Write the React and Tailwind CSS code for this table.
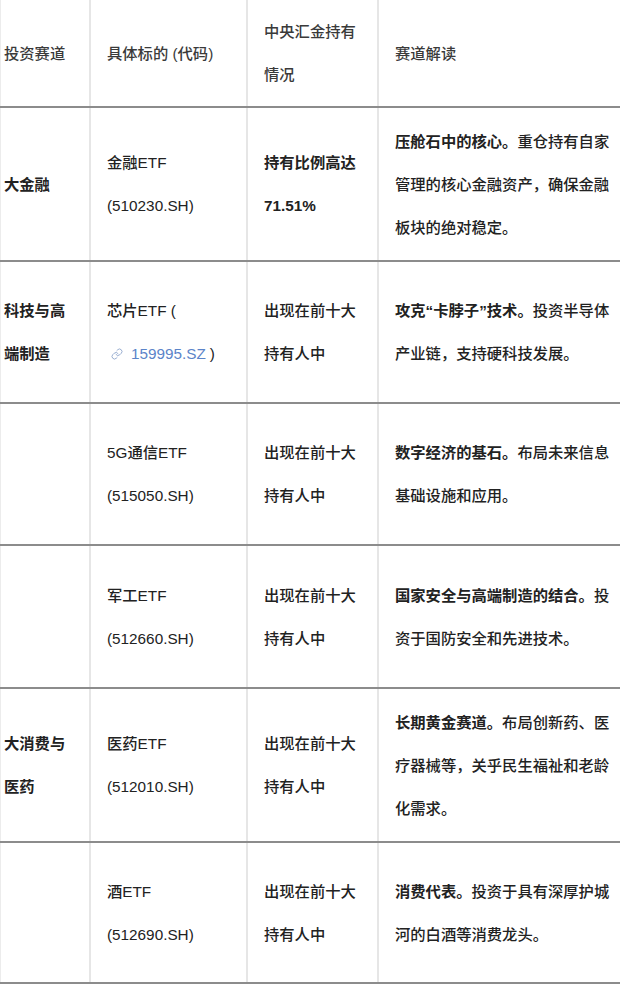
import { Link } from "lucide-react";

const rows = [
  {
    h: "h-[154px]",
    track: ["大金融"],
    target: ["金融ETF", "(510230.SH)"],
    hold: ["持有比例高达", "71.51%"],
    holdBold: true,
    lead: "压舱石中的核心。",
    rest: ["重仓持有自家", "管理的核心金融资产，确保金融", "板块的绝对稳定。"],
  },
  {
    h: "h-[142px]",
    track: ["科技与高", "端制造"],
    target: "link",
    hold: ["出现在前十大", "持有人中"],
    lead: "攻克“卡脖子”技术。",
    rest: ["投资半导体", "产业链，支持硬科技发展。"],
  },
  {
    h: "h-[142px]",
    track: [],
    target: ["5G通信ETF", "(515050.SH)"],
    hold: ["出现在前十大", "持有人中"],
    lead: "数字经济的基石。",
    rest: ["布局未来信息", "基础设施和应用。"],
  },
  {
    h: "h-[143px]",
    track: [],
    target: ["军工ETF", "(512660.SH)"],
    hold: ["出现在前十大", "持有人中"],
    lead: "国家安全与高端制造的结合。",
    rest: ["投", "资于国防安全和先进技术。"],
  },
  {
    h: "h-[154px]",
    track: ["大消费与", "医药"],
    target: ["医药ETF", "(512010.SH)"],
    hold: ["出现在前十大", "持有人中"],
    lead: "长期黄金赛道。",
    rest: ["布局创新药、医", "疗器械等，关乎民生福祉和老龄", "化需求。"],
  },
  {
    h: "h-[141px]",
    track: [],
    target: ["酒ETF", "(512690.SH)"],
    hold: ["出现在前十大", "持有人中"],
    lead: "消费代表。",
    rest: ["投资于具有深厚护城", "河的白酒等消费龙头。"],
  },
];

function Lines({ items, className = "" }) {
  return (
    <div className={className}>
      {items.map((t, i) => (
        <div key={i}>{t}</div>
      ))}
    </div>
  );
}

export default function App() {
  return (
    <div
      className="w-[620px] h-[984px] overflow-hidden bg-white text-[15.3px] leading-[43px] font-medium text-[#222] whitespace-nowrap"
      style={{ fontFamily: '"Liberation Sans", "Noto Sans CJK SC", sans-serif' }}
    >
      {/* header */}
      <div className="grid grid-cols-[89px_157px_131px_243px] h-[108px] border-b-2 border-[#8c8c8c] text-[#3a3a3a]">
        <div className="flex items-center pl-[3px] border-l border-[#ececec]">投资赛道</div>
        <div className="flex items-center px-4 border-l-2 border-[#e6e6e6]">具体标的 (代码)</div>
        <div className="flex items-center px-4 border-l-2 border-[#e6e6e6]">
          <Lines items={["中央汇金持有", "情况"]} />
        </div>
        <div className="flex items-center pl-4 border-l-2 border-[#e6e6e6]">赛道解读</div>
      </div>

      {rows.map((r, i) => (
        <div
          key={i}
          className={`grid grid-cols-[89px_157px_131px_243px] ${r.h} overflow-hidden border-b-2 border-[#8c8c8c]`}
        >
          <div className="flex items-center pl-[3px] border-l border-[#ececec] font-bold">
            <Lines items={r.track} />
          </div>
          <div className="flex items-center px-4 border-l-2 border-[#e6e6e6]">
            {r.target === "link" ? (
              <div>
                <div>芯片ETF (</div>
                <div className="flex items-center">
                  <span className="w-[4px]" />
                  <Link size={12} strokeWidth={1.8} className="text-[#8fa6cc] mr-[8px]" />
                  <span className="text-[#5b84c9] font-normal">159995.SZ</span>
                  <span className="ml-[4px]">)</span>
                </div>
              </div>
            ) : (
              <Lines items={r.target} />
            )}
          </div>
          <div className="flex items-center px-4 border-l-2 border-[#e6e6e6]">
            <Lines items={r.hold} className={r.holdBold ? "font-bold" : ""} />
          </div>
          <div className="flex items-center pl-4 border-l-2 border-[#e6e6e6]">
            <div>
              <div>
                <span className="font-bold">{r.lead}</span>
                {r.rest[0]}
              </div>
              {r.rest.slice(1).map((t, j) => (
                <div key={j}>{t}</div>
              ))}
            </div>
          </div>
        </div>
      ))}
    </div>
  );
}
